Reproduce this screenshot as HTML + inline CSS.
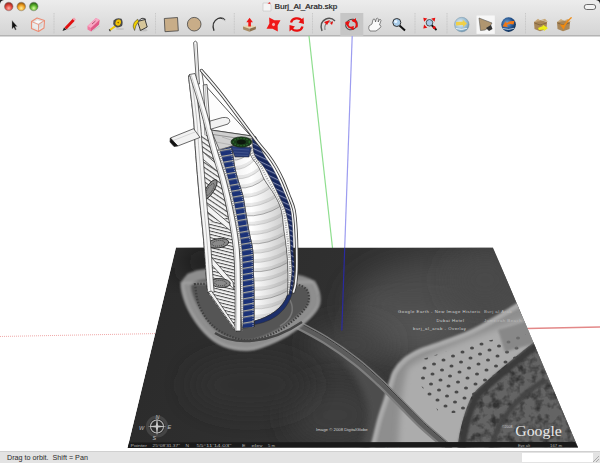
<!DOCTYPE html>
<html><head><meta charset="utf-8">
<style>
html,body{margin:0;padding:0;width:600px;height:463px;overflow:hidden;background:#fff;font-family:"Liberation Sans",sans-serif;}
#tb{position:absolute;left:0;top:0;width:600px;height:35px;background:linear-gradient(#ececec,#d5d5d5);border-bottom:1px solid #b4b4b4;box-shadow:0 1px 0 #d8d8d8;}
#title{position:absolute;left:274.5px;top:1.8px;font-size:8.1px;color:#333;text-shadow:0.35px 0 0 #555;}
#status{position:absolute;left:0;top:451px;width:600px;height:12px;background:#e3e3e3;border-top:1px solid #d0d0d0;}
#stxt{position:absolute;left:7px;top:453.4px;font-size:7.2px;color:#2a2a2a;}
#field{position:absolute;left:522px;top:453px;width:71px;height:9px;background:#fff;}
svg{position:absolute;left:0;top:0;}
</style></head><body>
<div id="tb"></div>
<div id="title">Burj_Al_Arab.skp</div>

<svg width="600" height="463" viewBox="0 0 600 463">
<defs>
<filter id="blur05" x="-20%" y="-20%" width="140%" height="140%"><feGaussianBlur stdDeviation="0.5"/></filter>
<filter id="blur1" x="-20%" y="-20%" width="140%" height="140%"><feGaussianBlur stdDeviation="1.2"/></filter>
<filter id="blur3" x="-30%" y="-30%" width="160%" height="160%"><feGaussianBlur stdDeviation="3"/></filter>
<filter id="blur6" x="-50%" y="-50%" width="200%" height="200%"><feGaussianBlur stdDeviation="6"/></filter>
<filter id="blur12" x="-60%" y="-60%" width="220%" height="220%"><feGaussianBlur stdDeviation="14"/></filter>
<filter id="noise" x="0" y="0" width="100%" height="100%"><feTurbulence type="fractalNoise" baseFrequency="0.35" numOctaves="2" seed="3"/><feColorMatrix type="matrix" values="0 0 0 0 0  0 0 0 0 0  0 0 0 0 0  0 0 0 1.8 -0.6"/><feComposite in2="SourceGraphic" operator="in"/></filter>
<filter id="noise2" x="0" y="0" width="100%" height="100%"><feTurbulence type="fractalNoise" baseFrequency="0.12" numOctaves="3" seed="7"/><feColorMatrix type="matrix" values="0 0 0 0 0  0 0 0 0 0  0 0 0 0 0  0 0 0 2.6 -1.1"/><feComposite in2="SourceGraphic" operator="in"/></filter>
<clipPath id="mapclip"><polygon points="176,247.5 493,247.5 578,447.5 127.5,448"/></clipPath>
<pattern id="slats2" width="3.2" height="3.2" patternUnits="userSpaceOnUse" patternTransform="rotate(14)">
 <rect width="3.2" height="3.2" fill="#f2f2f2"/><rect width="3.2" height="1" fill="#4a4a4a"/></pattern>
<pattern id="slats" width="4" height="4" patternUnits="userSpaceOnUse" patternTransform="rotate(34)">
 <rect width="4" height="4" fill="#f4f4f4"/><rect width="4" height="1.1" fill="#555"/></pattern>
<pattern id="bluestripe" width="10" height="6" patternUnits="userSpaceOnUse" patternTransform="rotate(-10)">
 <rect width="10" height="6" fill="#1b3278"/><rect width="10" height="1.3" fill="#aaa89c"/></pattern>
<pattern id="bluestripe2" width="8" height="4.5" patternUnits="userSpaceOnUse" patternTransform="rotate(25)">
 <rect width="8" height="4.5" fill="#17275e"/><rect width="8" height="1.1" fill="#7a84a8"/></pattern>
<linearGradient id="sailg" x1="0" y1="0" x2="1" y2="0">
 <stop offset="0" stop-color="#f0f0f0"/><stop offset="0.35" stop-color="#ffffff"/><stop offset="1" stop-color="#c6c6c6"/></linearGradient>
<pattern id="ribs" width="40" height="10.5" patternUnits="userSpaceOnUse" patternTransform="rotate(-12)">
 <rect width="40" height="10.5" fill="#ffffff" fill-opacity="0"/>
 <rect y="7.5" width="40" height="3" fill="#000" fill-opacity="0.10"/>
 <rect y="10" width="40" height="0.5" fill="#000" fill-opacity="0.35"/></pattern>
<linearGradient id="mapg" x1="0" y1="0" x2="1" y2="0.2">
 <stop offset="0" stop-color="#2a2a2a"/><stop offset="0.5" stop-color="#303030"/><stop offset="1" stop-color="#454545"/></linearGradient>
</defs>
<line x1="0" y1="336.5" x2="160" y2="333.5" stroke="#f0a8a8" stroke-width="1" stroke-dasharray="1,1"/>
<line x1="527" y1="328.5" x2="600" y2="327" stroke="#e38888" stroke-width="1.3"/>
<line x1="309" y1="36" x2="332.5" y2="248" stroke="#8ede8e" stroke-width="1.2"/>
<line x1="352.2" y1="36" x2="344.7" y2="248" stroke="#9c9cf0" stroke-width="1.2"/>
<g clip-path="url(#mapclip)">
<polygon points="176,247.5 493,247.5 578,447.5 127.5,448" fill="url(#mapg)"/>
<ellipse cx="450" cy="305" rx="100" ry="45" fill="#4c4c4c" filter="url(#blur12)"/>
<ellipse cx="410" cy="330" rx="55" ry="22" fill="#555" filter="url(#blur12)"/>
<ellipse cx="485" cy="280" rx="35" ry="28" fill="#4a4a4a" filter="url(#blur12)"/>
<ellipse cx="350" cy="345" rx="40" ry="18" fill="#444" filter="url(#blur12)"/>
<ellipse cx="215" cy="262" rx="40" ry="14" fill="#1e1e1e" filter="url(#blur12)"/>
<ellipse cx="335" cy="415" rx="45" ry="30" fill="#3c3c3c" filter="url(#blur12)"/>
<ellipse cx="250" cy="385" rx="60" ry="25" fill="#333" filter="url(#blur12)"/>
<path d="M330,345 C360,360 385,380 400,400 L430,450 L360,450 C370,420 380,400 330,345 Z" fill="#4e4e4e" filter="url(#blur3)"/>
<path d="M522.0,303.0 C516.7,306.2 498.8,317.0 490.0,322.0 C481.2,327.0 477.3,329.3 469.0,333.0 C460.7,336.7 448.2,341.0 440.0,344.0 C431.8,347.0 425.8,348.3 420.0,351.0 C414.2,353.7 409.2,356.5 405.0,360.0 C400.8,363.5 397.4,367.7 395.0,372.0 C392.6,376.3 391.9,380.8 390.4,385.6 C388.9,390.4 387.6,395.1 385.8,400.7 C384.0,406.2 381.8,411.8 379.8,418.9 C377.8,425.9 375.2,437.5 373.7,443.0 C372.2,448.5 371.4,450.5 371.0,452.0 L600,452 L600,290 Z" fill="#8e8e8e" filter="url(#blur1)"/>
<path d="M522.0,303.0 C516.7,306.2 498.8,317.0 490.0,322.0 C481.2,327.0 477.3,329.3 469.0,333.0 C460.7,336.7 448.2,341.0 440.0,344.0 C431.8,347.0 425.8,348.3 420.0,351.0 C414.2,353.7 409.2,356.5 405.0,360.0 C400.8,363.5 397.4,367.7 395.0,372.0 C392.6,376.3 391.9,380.8 390.4,385.6 C388.9,390.4 387.6,395.1 385.8,400.7 C384.0,406.2 381.8,411.8 379.8,418.9 C377.8,425.9 375.2,437.5 373.7,443.0 C372.2,448.5 371.4,450.5 371.0,452.0" stroke="#aaaaaa" stroke-width="5" fill="none" filter="url(#blur1)"/>
<path d="M408,368 C430,352 480,335 525,318 L545,350 C505,375 475,400 458,450 L398,450 C400,410 402,385 408,368 Z" fill="#acacac" filter="url(#blur3)"/>
<clipPath id="beachclip"><path d="M416,378 L423,359 C450,350 490,338 526,334 L520,357 C500,372 485,385 466,412 L440,414 Z"/></clipPath>
<g clip-path="url(#beachclip)" fill="#4a4a4a" filter="url(#blur05)"><ellipse cx="419.5" cy="342.0" rx="2" ry="1.6"/><ellipse cx="429.0" cy="338.0" rx="2" ry="1.6"/><ellipse cx="438.5" cy="334.0" rx="2" ry="1.6"/><ellipse cx="448.0" cy="330.0" rx="2" ry="1.6"/><ellipse cx="457.5" cy="326.0" rx="2" ry="1.6"/><ellipse cx="467.0" cy="322.0" rx="2" ry="1.6"/><ellipse cx="476.5" cy="318.0" rx="2" ry="1.6"/><ellipse cx="486.0" cy="314.0" rx="2" ry="1.6"/><ellipse cx="495.5" cy="310.0" rx="2" ry="1.6"/><ellipse cx="505.0" cy="306.0" rx="2" ry="1.6"/><ellipse cx="514.5" cy="302.0" rx="2" ry="1.6"/><ellipse cx="524.0" cy="298.0" rx="2" ry="1.6"/><ellipse cx="533.5" cy="294.0" rx="2" ry="1.6"/><ellipse cx="543.0" cy="290.0" rx="2" ry="1.6"/><ellipse cx="418.0" cy="352.0" rx="2" ry="1.6"/><ellipse cx="427.5" cy="348.0" rx="2" ry="1.6"/><ellipse cx="437.0" cy="344.0" rx="2" ry="1.6"/><ellipse cx="446.5" cy="340.0" rx="2" ry="1.6"/><ellipse cx="456.0" cy="336.0" rx="2" ry="1.6"/><ellipse cx="465.5" cy="332.0" rx="2" ry="1.6"/><ellipse cx="475.0" cy="328.0" rx="2" ry="1.6"/><ellipse cx="484.5" cy="324.0" rx="2" ry="1.6"/><ellipse cx="494.0" cy="320.0" rx="2" ry="1.6"/><ellipse cx="503.5" cy="316.0" rx="2" ry="1.6"/><ellipse cx="513.0" cy="312.0" rx="2" ry="1.6"/><ellipse cx="522.5" cy="308.0" rx="2" ry="1.6"/><ellipse cx="532.0" cy="304.0" rx="2" ry="1.6"/><ellipse cx="541.5" cy="300.0" rx="2" ry="1.6"/><ellipse cx="416.5" cy="362.0" rx="2" ry="1.6"/><ellipse cx="426.0" cy="358.0" rx="2" ry="1.6"/><ellipse cx="435.5" cy="354.0" rx="2" ry="1.6"/><ellipse cx="445.0" cy="350.0" rx="2" ry="1.6"/><ellipse cx="454.5" cy="346.0" rx="2" ry="1.6"/><ellipse cx="464.0" cy="342.0" rx="2" ry="1.6"/><ellipse cx="473.5" cy="338.0" rx="2" ry="1.6"/><ellipse cx="483.0" cy="334.0" rx="2" ry="1.6"/><ellipse cx="492.5" cy="330.0" rx="2" ry="1.6"/><ellipse cx="502.0" cy="326.0" rx="2" ry="1.6"/><ellipse cx="511.5" cy="322.0" rx="2" ry="1.6"/><ellipse cx="521.0" cy="318.0" rx="2" ry="1.6"/><ellipse cx="530.5" cy="314.0" rx="2" ry="1.6"/><ellipse cx="540.0" cy="310.0" rx="2" ry="1.6"/><ellipse cx="415.0" cy="372.0" rx="2" ry="1.6"/><ellipse cx="424.5" cy="368.0" rx="2" ry="1.6"/><ellipse cx="434.0" cy="364.0" rx="2" ry="1.6"/><ellipse cx="443.5" cy="360.0" rx="2" ry="1.6"/><ellipse cx="453.0" cy="356.0" rx="2" ry="1.6"/><ellipse cx="462.5" cy="352.0" rx="2" ry="1.6"/><ellipse cx="472.0" cy="348.0" rx="2" ry="1.6"/><ellipse cx="481.5" cy="344.0" rx="2" ry="1.6"/><ellipse cx="491.0" cy="340.0" rx="2" ry="1.6"/><ellipse cx="500.5" cy="336.0" rx="2" ry="1.6"/><ellipse cx="510.0" cy="332.0" rx="2" ry="1.6"/><ellipse cx="519.5" cy="328.0" rx="2" ry="1.6"/><ellipse cx="529.0" cy="324.0" rx="2" ry="1.6"/><ellipse cx="538.5" cy="320.0" rx="2" ry="1.6"/><ellipse cx="413.5" cy="382.0" rx="2" ry="1.6"/><ellipse cx="423.0" cy="378.0" rx="2" ry="1.6"/><ellipse cx="432.5" cy="374.0" rx="2" ry="1.6"/><ellipse cx="442.0" cy="370.0" rx="2" ry="1.6"/><ellipse cx="451.5" cy="366.0" rx="2" ry="1.6"/><ellipse cx="461.0" cy="362.0" rx="2" ry="1.6"/><ellipse cx="470.5" cy="358.0" rx="2" ry="1.6"/><ellipse cx="480.0" cy="354.0" rx="2" ry="1.6"/><ellipse cx="489.5" cy="350.0" rx="2" ry="1.6"/><ellipse cx="499.0" cy="346.0" rx="2" ry="1.6"/><ellipse cx="508.5" cy="342.0" rx="2" ry="1.6"/><ellipse cx="518.0" cy="338.0" rx="2" ry="1.6"/><ellipse cx="527.5" cy="334.0" rx="2" ry="1.6"/><ellipse cx="537.0" cy="330.0" rx="2" ry="1.6"/><ellipse cx="412.0" cy="392.0" rx="2" ry="1.6"/><ellipse cx="421.5" cy="388.0" rx="2" ry="1.6"/><ellipse cx="431.0" cy="384.0" rx="2" ry="1.6"/><ellipse cx="440.5" cy="380.0" rx="2" ry="1.6"/><ellipse cx="450.0" cy="376.0" rx="2" ry="1.6"/><ellipse cx="459.5" cy="372.0" rx="2" ry="1.6"/><ellipse cx="469.0" cy="368.0" rx="2" ry="1.6"/><ellipse cx="478.5" cy="364.0" rx="2" ry="1.6"/><ellipse cx="488.0" cy="360.0" rx="2" ry="1.6"/><ellipse cx="497.5" cy="356.0" rx="2" ry="1.6"/><ellipse cx="507.0" cy="352.0" rx="2" ry="1.6"/><ellipse cx="516.5" cy="348.0" rx="2" ry="1.6"/><ellipse cx="526.0" cy="344.0" rx="2" ry="1.6"/><ellipse cx="535.5" cy="340.0" rx="2" ry="1.6"/><ellipse cx="410.5" cy="402.0" rx="2" ry="1.6"/><ellipse cx="420.0" cy="398.0" rx="2" ry="1.6"/><ellipse cx="429.5" cy="394.0" rx="2" ry="1.6"/><ellipse cx="439.0" cy="390.0" rx="2" ry="1.6"/><ellipse cx="448.5" cy="386.0" rx="2" ry="1.6"/><ellipse cx="458.0" cy="382.0" rx="2" ry="1.6"/><ellipse cx="467.5" cy="378.0" rx="2" ry="1.6"/><ellipse cx="477.0" cy="374.0" rx="2" ry="1.6"/><ellipse cx="486.5" cy="370.0" rx="2" ry="1.6"/><ellipse cx="496.0" cy="366.0" rx="2" ry="1.6"/><ellipse cx="505.5" cy="362.0" rx="2" ry="1.6"/><ellipse cx="515.0" cy="358.0" rx="2" ry="1.6"/><ellipse cx="524.5" cy="354.0" rx="2" ry="1.6"/><ellipse cx="534.0" cy="350.0" rx="2" ry="1.6"/><ellipse cx="409.0" cy="412.0" rx="2" ry="1.6"/><ellipse cx="418.5" cy="408.0" rx="2" ry="1.6"/><ellipse cx="428.0" cy="404.0" rx="2" ry="1.6"/><ellipse cx="437.5" cy="400.0" rx="2" ry="1.6"/><ellipse cx="447.0" cy="396.0" rx="2" ry="1.6"/><ellipse cx="456.5" cy="392.0" rx="2" ry="1.6"/><ellipse cx="466.0" cy="388.0" rx="2" ry="1.6"/><ellipse cx="475.5" cy="384.0" rx="2" ry="1.6"/><ellipse cx="485.0" cy="380.0" rx="2" ry="1.6"/><ellipse cx="494.5" cy="376.0" rx="2" ry="1.6"/><ellipse cx="504.0" cy="372.0" rx="2" ry="1.6"/><ellipse cx="513.5" cy="368.0" rx="2" ry="1.6"/><ellipse cx="523.0" cy="364.0" rx="2" ry="1.6"/><ellipse cx="532.5" cy="360.0" rx="2" ry="1.6"/><ellipse cx="407.5" cy="422.0" rx="2" ry="1.6"/><ellipse cx="417.0" cy="418.0" rx="2" ry="1.6"/><ellipse cx="426.5" cy="414.0" rx="2" ry="1.6"/><ellipse cx="436.0" cy="410.0" rx="2" ry="1.6"/><ellipse cx="445.5" cy="406.0" rx="2" ry="1.6"/><ellipse cx="455.0" cy="402.0" rx="2" ry="1.6"/><ellipse cx="464.5" cy="398.0" rx="2" ry="1.6"/><ellipse cx="474.0" cy="394.0" rx="2" ry="1.6"/><ellipse cx="483.5" cy="390.0" rx="2" ry="1.6"/><ellipse cx="493.0" cy="386.0" rx="2" ry="1.6"/><ellipse cx="502.5" cy="382.0" rx="2" ry="1.6"/><ellipse cx="512.0" cy="378.0" rx="2" ry="1.6"/><ellipse cx="521.5" cy="374.0" rx="2" ry="1.6"/><ellipse cx="531.0" cy="370.0" rx="2" ry="1.6"/><ellipse cx="406.0" cy="432.0" rx="2" ry="1.6"/><ellipse cx="415.5" cy="428.0" rx="2" ry="1.6"/><ellipse cx="425.0" cy="424.0" rx="2" ry="1.6"/><ellipse cx="434.5" cy="420.0" rx="2" ry="1.6"/><ellipse cx="444.0" cy="416.0" rx="2" ry="1.6"/><ellipse cx="453.5" cy="412.0" rx="2" ry="1.6"/><ellipse cx="463.0" cy="408.0" rx="2" ry="1.6"/><ellipse cx="472.5" cy="404.0" rx="2" ry="1.6"/><ellipse cx="482.0" cy="400.0" rx="2" ry="1.6"/><ellipse cx="491.5" cy="396.0" rx="2" ry="1.6"/><ellipse cx="501.0" cy="392.0" rx="2" ry="1.6"/><ellipse cx="510.5" cy="388.0" rx="2" ry="1.6"/><ellipse cx="520.0" cy="384.0" rx="2" ry="1.6"/><ellipse cx="529.5" cy="380.0" rx="2" ry="1.6"/><ellipse cx="404.5" cy="442.0" rx="2" ry="1.6"/><ellipse cx="414.0" cy="438.0" rx="2" ry="1.6"/><ellipse cx="423.5" cy="434.0" rx="2" ry="1.6"/><ellipse cx="433.0" cy="430.0" rx="2" ry="1.6"/><ellipse cx="442.5" cy="426.0" rx="2" ry="1.6"/><ellipse cx="452.0" cy="422.0" rx="2" ry="1.6"/><ellipse cx="461.5" cy="418.0" rx="2" ry="1.6"/><ellipse cx="471.0" cy="414.0" rx="2" ry="1.6"/><ellipse cx="480.5" cy="410.0" rx="2" ry="1.6"/><ellipse cx="490.0" cy="406.0" rx="2" ry="1.6"/><ellipse cx="499.5" cy="402.0" rx="2" ry="1.6"/><ellipse cx="509.0" cy="398.0" rx="2" ry="1.6"/><ellipse cx="518.5" cy="394.0" rx="2" ry="1.6"/><ellipse cx="528.0" cy="390.0" rx="2" ry="1.6"/><ellipse cx="403.0" cy="452.0" rx="2" ry="1.6"/><ellipse cx="412.5" cy="448.0" rx="2" ry="1.6"/><ellipse cx="422.0" cy="444.0" rx="2" ry="1.6"/><ellipse cx="431.5" cy="440.0" rx="2" ry="1.6"/><ellipse cx="441.0" cy="436.0" rx="2" ry="1.6"/><ellipse cx="450.5" cy="432.0" rx="2" ry="1.6"/><ellipse cx="460.0" cy="428.0" rx="2" ry="1.6"/><ellipse cx="469.5" cy="424.0" rx="2" ry="1.6"/><ellipse cx="479.0" cy="420.0" rx="2" ry="1.6"/><ellipse cx="488.5" cy="416.0" rx="2" ry="1.6"/><ellipse cx="498.0" cy="412.0" rx="2" ry="1.6"/><ellipse cx="507.5" cy="408.0" rx="2" ry="1.6"/><ellipse cx="517.0" cy="404.0" rx="2" ry="1.6"/><ellipse cx="526.5" cy="400.0" rx="2" ry="1.6"/><ellipse cx="401.5" cy="462.0" rx="2" ry="1.6"/><ellipse cx="411.0" cy="458.0" rx="2" ry="1.6"/><ellipse cx="420.5" cy="454.0" rx="2" ry="1.6"/><ellipse cx="430.0" cy="450.0" rx="2" ry="1.6"/><ellipse cx="439.5" cy="446.0" rx="2" ry="1.6"/><ellipse cx="449.0" cy="442.0" rx="2" ry="1.6"/><ellipse cx="458.5" cy="438.0" rx="2" ry="1.6"/><ellipse cx="468.0" cy="434.0" rx="2" ry="1.6"/><ellipse cx="477.5" cy="430.0" rx="2" ry="1.6"/><ellipse cx="487.0" cy="426.0" rx="2" ry="1.6"/><ellipse cx="496.5" cy="422.0" rx="2" ry="1.6"/><ellipse cx="506.0" cy="418.0" rx="2" ry="1.6"/><ellipse cx="515.5" cy="414.0" rx="2" ry="1.6"/><ellipse cx="525.0" cy="410.0" rx="2" ry="1.6"/></g>
<path d="M534.0,342.0 C531.3,344.2 523.3,350.7 518.0,355.0 C512.7,359.3 507.0,363.8 502.0,368.0 C497.0,372.2 492.7,375.8 488.0,380.0 C483.3,384.2 477.7,388.0 474.0,393.0 C470.3,398.0 468.3,403.5 466.0,410.0 C463.7,416.5 461.5,425.0 460.0,432.0 C458.5,439.0 457.5,448.7 457.0,452.0 L600,452 L600,330 Z" fill="#646464"/>
<path d="M534.0,342.0 C531.3,344.2 523.3,350.7 518.0,355.0 C512.7,359.3 507.0,363.8 502.0,368.0 C497.0,372.2 492.7,375.8 488.0,380.0 C483.3,384.2 477.7,388.0 474.0,393.0 C470.3,398.0 468.3,403.5 466.0,410.0 C463.7,416.5 461.5,425.0 460.0,432.0 C458.5,439.0 457.5,448.7 457.0,452.0 L600,452 L600,330 Z" fill="#000" opacity="0.5" filter="url(#noise2)"/>
<path d="M538.0,344.0 C535.3,346.2 527.3,352.7 522.0,357.0 C516.7,361.3 511.0,365.8 506.0,370.0 C501.0,374.2 496.7,377.8 492.0,382.0 C487.3,386.2 481.7,390.0 478.0,395.0 C474.3,400.0 472.3,405.5 470.0,412.0 C467.7,418.5 465.5,427.0 464.0,434.0 C462.5,441.0 461.5,450.7 461.0,454.0" stroke="#3a3a3a" stroke-width="7" fill="none" filter="url(#blur1)"/>
<path d="M545,380 C520,395 500,415 490,450" stroke="#444" stroke-width="5" fill="none" filter="url(#blur1)"/>
<path d="M498,330 L530,320 L536,343 L505,352 Z" fill="#7a7a7a" filter="url(#blur1)" opacity="0.7"/>
<path d="M290.0,322.0 C290.9,322.3 289.2,320.6 295.1,323.6 C301.0,326.6 315.3,333.9 325.4,340.2 C335.5,346.5 346.5,354.3 355.6,361.4 C364.7,368.5 372.2,375.6 379.8,382.6 C387.4,389.7 393.9,396.6 401.0,403.7 C408.1,410.8 414.8,418.1 422.1,424.9 C429.4,431.7 440.2,440.4 444.8,444.6 C449.4,448.8 449.1,449.1 450.0,450.0" stroke="#7e7e7e" stroke-width="8.5" fill="none" filter="url(#blur05)"/>
<path d="M290.0,322.0 C290.9,322.3 289.2,320.6 295.1,323.6 C301.0,326.6 315.3,333.9 325.4,340.2 C335.5,346.5 346.5,354.3 355.6,361.4 C364.7,368.5 372.2,375.6 379.8,382.6 C387.4,389.7 393.9,396.6 401.0,403.7 C408.1,410.8 414.8,418.1 422.1,424.9 C429.4,431.7 440.2,440.4 444.8,444.6 C449.4,448.8 449.1,449.1 450.0,450.0" stroke="#5c5c5c" stroke-width="4" fill="none"/>
<path d="M290.0,322.0 C290.9,322.3 289.2,320.6 295.1,323.6 C301.0,326.6 315.3,333.9 325.4,340.2 C335.5,346.5 346.5,354.3 355.6,361.4 C364.7,368.5 372.2,375.6 379.8,382.6 C387.4,389.7 393.9,396.6 401.0,403.7 C408.1,410.8 414.8,418.1 422.1,424.9 C429.4,431.7 440.2,440.4 444.8,444.6 C449.4,448.8 449.1,449.1 450.0,450.0" stroke="#3a3a3a" stroke-width="1" fill="none" transform="translate(1.5,-2)"/>
<path d="M190.5,278.1 C189.7,279.6 185.4,282.1 185.8,287.1 C186.2,292.1 189.3,301.0 193.0,308.1 C196.7,315.2 202.5,324.1 207.9,329.7 C213.2,335.3 218.1,339.1 225.2,341.7 C232.2,344.3 241.7,346.1 250.0,345.3 C258.3,344.5 267.4,340.3 274.8,336.9 C282.3,333.5 288.4,329.7 294.6,324.9 C300.8,320.1 308.7,312.9 312.0,308.1 C315.3,303.3 314.9,300.1 314.4,296.1 C314.0,292.1 312.8,286.9 309.5,284.1 C306.2,281.3 301.5,280.7 294.6,279.3 C287.8,277.8 279.1,276.3 268.6,275.4 C258.1,274.5 242.4,273.8 231.4,273.6 C220.4,273.5 209.4,273.8 202.6,274.5 C195.8,275.2 192.5,277.5 190.5,278.1 Z" fill="#545454" stroke="#8e8e8e" stroke-width="10" filter="url(#blur1)"/>
<path d="M182.0,283.0 C183.2,287.2 185.2,300.0 189.0,308.0 C192.8,316.0 199.2,324.8 205.0,331.0 C210.8,337.2 216.5,342.0 224.0,345.0 C231.5,348.0 241.2,349.8 250.0,349.0 C258.8,348.2 269.0,343.7 277.0,340.0 C285.0,336.3 291.3,332.3 298.0,327.0 C304.7,321.7 313.5,313.3 317.0,308.0 C320.5,302.7 319.5,299.3 319.0,295.0 C318.5,290.7 314.8,284.2 314.0,282.0 Z" fill="none" stroke="#a8a8a8" stroke-width="3" opacity="0.6" filter="url(#blur1)"/>
<path d="M195.0,284.0 C195.7,287.5 196.2,298.2 199.0,305.0 C201.8,311.8 206.5,319.7 212.0,325.0 C217.5,330.3 225.3,334.5 232.0,337.0 C238.7,339.5 244.7,340.8 252.0,340.0 C259.3,339.2 268.7,335.7 276.0,332.0 C283.3,328.3 290.7,322.8 296.0,318.0 C301.3,313.2 306.3,307.8 308.0,303.0 C309.7,298.2 309.0,292.5 306.0,289.0 C303.0,285.5 292.7,283.2 290.0,282.0 Z" fill="none" stroke="#404040" stroke-width="2.2" stroke-dasharray="1.5,1.5" filter="url(#blur05)"/>
<path d="M215,333 C235,346 270,344 302,322" fill="none" stroke="#444" stroke-width="2.5" filter="url(#blur05)"/>
<path d="M290,300 C296,312 290,320 280,326" fill="none" stroke="#777" stroke-width="1.5"/>
<g font-family="Liberation Sans" font-size="4.3" fill="#d4d4d4">
<text x="398" y="313" letter-spacing="0.5">Google Earth - New Image Historic</text>
<text x="484" y="313" letter-spacing="0.5" fill="#bbb">Burj al Arab</text>
<text x="436.5" y="321.5" letter-spacing="0.5">Dubai Hotel</text>
<text x="484" y="321.5" letter-spacing="0.5" fill="#bbb">Jumeirah Beach</text>
<text x="413" y="330" letter-spacing="0.5">burj_al_arab - Overlay</text>
<text x="316" y="431">Image &#169; 2008 DigitalGlobe</text>
<text x="367.5" y="446.5">Streaming |||||||||| 100%</text>
</g>
<text x="515.3" y="435.5" font-family="Liberation Serif" font-size="15" fill="#e8e8e8" textLength="46.5" lengthAdjust="spacingAndGlyphs">Google</text>
<text x="502" y="428" font-family="Liberation Sans" font-size="3.5" fill="#ccc">&#169;2008</text>
<g transform="translate(157,426.5)" fill="none">
<circle r="9.5" stroke="#4a4a4a" stroke-width="3.2" opacity="0.8"/>
<circle r="6.5" stroke="#b4b4b4" stroke-width="1.1"/>
<path d="M0,-9.5 L1.1,-1.1 L9.5,0 L1.1,1.1 L0,9.5 L-1.1,1.1 L-9.5,0 L-1.1,-1.1 Z" fill="#c8c8c8" stroke="none"/>
</g>
<g font-family="Liberation Sans" font-size="5.5" fill="#bcbcbc" font-style="italic"><text x="155.5" y="418.5">N</text><text x="152.5" y="439.5">S</text><text x="139" y="429.5">W</text><text x="167.5" y="428.5">E</text></g>
<polygon points="129,442.5 575,442 578,447.5 127.5,448" fill="#1a1a1a"/>
<g font-family="Liberation Sans" font-size="4.3" fill="#b0b0b0">
<text x="130.5" y="447.3" textLength="16.5" lengthAdjust="spacingAndGlyphs">Pointer</text>
<text x="152.5" y="447.3" textLength="27.5" lengthAdjust="spacingAndGlyphs">25&#176;08'31.37&quot;</text>
<text x="185.5" y="447.3" textLength="3.5" lengthAdjust="spacingAndGlyphs">N</text>
<text x="196.5" y="447.3" textLength="35" lengthAdjust="spacingAndGlyphs">55&#176;11'14.03&quot;</text>
<text x="242" y="447.3" textLength="3.5" lengthAdjust="spacingAndGlyphs">E</text>
<text x="251.5" y="447.3" textLength="11" lengthAdjust="spacingAndGlyphs">elev</text>
<text x="268" y="447.3" textLength="7" lengthAdjust="spacingAndGlyphs">5 m</text>
<text x="518" y="447.3" textLength="12" lengthAdjust="spacingAndGlyphs">Eye alt</text>
<text x="550" y="447.3" textLength="12" lengthAdjust="spacingAndGlyphs">167 m</text>
</g>
</g>
<line x1="344.7" y1="248" x2="341.8" y2="330.5" stroke="#2a2aa0" stroke-width="1.2"/>
<g stroke="#2a2a2a" stroke-width="0.7" stroke-linejoin="round">
<path d="M193.6,42.5 Q195.3,39.8 197,42.3 L199.4,84 L196.6,84 Z" fill="#fafafa"/>
<path d="M195.2,44 L197.9,84" stroke="#aaa" stroke-width="0.4" fill="none"/>
<path d="M201.5,70.5 C204.9,74.6 213.1,83.6 222.0,95.0 C230.9,106.4 247.3,129.0 255.0,139.0 C262.7,149.0 265.8,152.3 268.0,155.0 L250.5,135.8 L211.0,130.0 Z" fill="#fdfdfd"/>
<path d="M205.8,86 L250.5,135.8" fill="none" stroke-width="0.8"/>
<path d="M203.2,85 L207,84.5 L210.5,133 L206.5,133 Z" fill="#f6f6f6"/>
<path d="M205.1,85 L208.5,133" stroke="#777" stroke-width="0.4" fill="none"/>
<clipPath id="facclip"><path d="M188.5,76.0 C189.3,83.3 192.4,107.7 193.6,120.0 C194.8,132.3 194.4,136.7 195.4,150.0 C196.4,163.3 198.2,185.0 199.6,200.0 C201.0,215.0 202.4,225.8 203.6,240.0 C204.8,254.2 206.1,276.2 206.9,285.0 C207.7,293.8 208.1,291.7 208.3,293.0 L236.0,332.0 C235.0,324.2 235.2,303.5 235.0,290.0 C234.8,276.5 234.7,262.5 233.5,250.0 C232.3,237.5 230.2,226.7 228.0,215.0 C225.8,203.3 222.8,190.8 220.0,180.0 C217.2,169.2 214.2,161.3 211.0,150.0 C207.8,138.7 204.6,124.6 201.0,112.0 C197.4,99.4 191.4,80.8 189.5,74.5 Z"/></clipPath>
<path d="M188.5,76.0 C189.3,83.3 192.4,107.7 193.6,120.0 C194.8,132.3 194.4,136.7 195.4,150.0 C196.4,163.3 198.2,185.0 199.6,200.0 C201.0,215.0 202.4,225.8 203.6,240.0 C204.8,254.2 206.1,276.2 206.9,285.0 C207.7,293.8 208.1,291.7 208.3,293.0 L236.0,332.0 C235.0,324.2 235.2,303.5 235.0,290.0 C234.8,276.5 234.7,262.5 233.5,250.0 C232.3,237.5 230.2,226.7 228.0,215.0 C225.8,203.3 222.8,190.8 220.0,180.0 C217.2,169.2 214.2,161.3 211.0,150.0 C207.8,138.7 204.6,124.6 201.0,112.0 C197.4,99.4 191.4,80.8 189.5,74.5 Z" fill="url(#slats)"/>
<g clip-path="url(#facclip)"><path d="M180,230 L250,212 L250,340 L180,340 Z" fill="url(#slats2)" stroke="none"/></g>
<g clip-path="url(#facclip)" stroke="none"><path d="M180,70 L240,70 L240,128 L180,140 Z" fill="#f8f8f8"/>
<path d="M197,80 L200,135 M201,82 L205,135" stroke="#444" stroke-width="0.6" fill="none"/></g>
<path d="M197.5,147 L222,169 L223.5,176.5 L198,155 Z" fill="#f4f4f4"/>
<path d="M201,199.5 L230,224 L231.5,231.5 L201.5,207 Z" fill="#f4f4f4"/>
<path d="M205,250 L233,282 L234,289.5 L205.5,258 Z" fill="#f4f4f4"/>
<ellipse cx="210" cy="189.5" rx="4" ry="11.5" transform="rotate(33 210 189.5)" fill="#8a8a8a" stroke="#2a2a2a" stroke-width="0.9"/>
<ellipse cx="210" cy="189.5" rx="2.4" ry="6.8999999999999995" transform="rotate(33 210 189.5)" fill="none" stroke="#222" stroke-width="0.7" stroke-dasharray="1,1"/>
<ellipse cx="218.3" cy="243.3" rx="10.5" ry="4.6" transform="rotate(-8 218.3 243.3)" fill="#8a8a8a" stroke="#2a2a2a" stroke-width="0.9"/>
<ellipse cx="218.3" cy="243.3" rx="6.3" ry="2.76" transform="rotate(-8 218.3 243.3)" fill="none" stroke="#222" stroke-width="0.7" stroke-dasharray="1,1"/>
<ellipse cx="220.5" cy="283" rx="9.8" ry="4.4" transform="rotate(4 220.5 283)" fill="#8a8a8a" stroke="#2a2a2a" stroke-width="0.9"/>
<ellipse cx="220.5" cy="283" rx="5.88" ry="2.64" transform="rotate(4 220.5 283)" fill="none" stroke="#222" stroke-width="0.7" stroke-dasharray="1,1"/>
<path d="M188.5,76.0 C189.3,83.3 192.4,107.7 193.6,120.0 C194.8,132.3 194.4,136.7 195.4,150.0 C196.4,163.3 198.2,185.0 199.6,200.0 C201.0,215.0 202.4,225.8 203.6,240.0 C204.8,254.2 206.1,276.2 206.9,285.0 C207.7,293.8 208.1,291.7 208.3,293.0 L214.5,292.0 C214.3,290.8 214.2,293.7 213.5,285.0 C212.8,276.3 211.5,254.2 210.3,240.0 C209.1,225.8 207.8,215.0 206.5,200.0 C205.2,185.0 203.6,163.3 202.5,150.0 C201.4,136.7 201.4,132.4 200.0,120.0 C198.6,107.6 195.0,82.9 194.0,75.5 Z" fill="#f6f6f6"/>
<path d="M191.2,75.8 C192.2,83.1 195.5,107.6 196.8,120.0 C198.1,132.4 197.9,136.7 198.9,150.0 C200.0,163.3 201.7,185.0 203.1,200.0 C204.4,215.0 205.8,225.8 206.9,240.0 C208.1,254.2 209.5,276.2 210.2,285.0 C210.9,293.8 211.2,291.2 211.4,292.5" fill="none" stroke="#777" stroke-width="0.4"/>
<path d="M208.3,292 L236,331 L236,327 L211.5,291 Z" fill="#f0f0f0"/>
<path d="M211,130 L250.5,135.8 L256,137 L231.6,146.4 L219.5,150.2 Z" fill="#d0d0d0"/>
<path d="M213,134.5 L250,140" stroke="#555" stroke-width="0.5" fill="none"/>
<path d="M216,142 L232,145 M222,137 L240,143" stroke="#888" stroke-width="0.4" fill="none"/>
<clipPath id="sailclip"><path d="M231.6,146.4 L249.0,139.0 C249.3,141.7 249.1,150.3 250.7,155.0 C252.3,159.7 256.4,162.8 258.7,167.0 C261.0,171.2 262.0,175.3 264.7,180.0 C267.4,184.7 271.9,190.0 274.7,195.0 C277.5,200.0 279.8,204.2 281.3,210.0 C282.9,215.8 283.1,223.3 284.0,230.0 C284.9,236.7 286.0,243.3 286.7,250.0 C287.4,256.7 287.8,264.2 288.0,270.0 C288.2,275.8 288.1,280.8 288.0,285.0 C287.9,289.2 287.6,293.3 287.5,295.0 C283,308 270,317 254.6,321 L254.0,327.0 C254.0,320.8 254.1,299.5 254.0,290.0 C253.9,280.5 253.5,276.7 253.3,270.0 C253.1,263.3 253.5,256.7 252.7,250.0 C251.9,243.3 249.9,236.7 248.7,230.0 C247.5,223.3 246.3,215.8 245.3,210.0 C244.3,204.2 243.9,200.0 242.7,195.0 C241.5,190.0 239.3,184.7 238.0,180.0 C236.7,175.3 235.8,172.6 234.7,167.0 C233.6,161.4 232.1,149.8 231.6,146.4 Z"/></clipPath>
<path d="M231.6,146.4 L249.0,139.0 C249.3,141.7 249.1,150.3 250.7,155.0 C252.3,159.7 256.4,162.8 258.7,167.0 C261.0,171.2 262.0,175.3 264.7,180.0 C267.4,184.7 271.9,190.0 274.7,195.0 C277.5,200.0 279.8,204.2 281.3,210.0 C282.9,215.8 283.1,223.3 284.0,230.0 C284.9,236.7 286.0,243.3 286.7,250.0 C287.4,256.7 287.8,264.2 288.0,270.0 C288.2,275.8 288.1,280.8 288.0,285.0 C287.9,289.2 287.6,293.3 287.5,295.0 C283,308 270,317 254.6,321 L254.0,327.0 C254.0,320.8 254.1,299.5 254.0,290.0 C253.9,280.5 253.5,276.7 253.3,270.0 C253.1,263.3 253.5,256.7 252.7,250.0 C251.9,243.3 249.9,236.7 248.7,230.0 C247.5,223.3 246.3,215.8 245.3,210.0 C244.3,204.2 243.9,200.0 242.7,195.0 C241.5,190.0 239.3,184.7 238.0,180.0 C236.7,175.3 235.8,172.6 234.7,167.0 C233.6,161.4 232.1,149.8 231.6,146.4 Z" fill="url(#sailg)"/>
<g clip-path="url(#sailclip)" fill="none" stroke="none">
<path d="M231.6,156.5 Q241.9,158.0 252.2,146.5 L252.2,150.0 Q241.9,161.5 231.6,160.0 Z" fill="#000" opacity="0.08" filter="url(#blur05)"/>
<path d="M231.6,160.0 Q241.9,161.5 252.2,150.0" stroke="#666" stroke-width="0.5"/>
<path d="M233.3,165.8 Q244.4,167.3 255.6,155.8 L255.6,159.3 Q244.4,170.8 233.3,169.3 Z" fill="#000" opacity="0.08" filter="url(#blur05)"/>
<path d="M233.3,169.3 Q244.4,170.8 255.6,159.3" stroke="#aaa" stroke-width="0.5"/>
<path d="M235.6,175.1 Q248.5,176.6 261.4,165.1 L261.4,168.6 Q248.5,180.1 235.6,178.6 Z" fill="#000" opacity="0.08" filter="url(#blur05)"/>
<path d="M235.6,178.6 Q248.5,180.1 261.4,168.6" stroke="#aaa" stroke-width="0.5"/>
<path d="M238.5,184.4 Q252.1,185.9 265.7,174.4 L265.7,177.9 Q252.1,189.4 238.5,187.9 Z" fill="#000" opacity="0.08" filter="url(#blur05)"/>
<path d="M238.5,187.9 Q252.1,189.4 265.7,177.9" stroke="#666" stroke-width="0.5"/>
<path d="M241.1,193.7 Q256.3,195.2 271.5,183.7 L271.5,187.2 Q256.3,198.7 241.1,197.2 Z" fill="#000" opacity="0.08" filter="url(#blur05)"/>
<path d="M241.1,197.2 Q256.3,198.7 271.5,187.2" stroke="#aaa" stroke-width="0.5"/>
<path d="M242.7,203.0 Q260.0,204.5 277.4,193.0 L277.4,196.5 Q260.0,208.0 242.7,206.5 Z" fill="#000" opacity="0.08" filter="url(#blur05)"/>
<path d="M242.7,206.5 Q260.0,208.0 277.4,196.5" stroke="#aaa" stroke-width="0.5"/>
<path d="M244.3,212.3 Q262.9,213.8 281.5,202.3 L281.5,205.8 Q262.9,217.3 244.3,215.8 Z" fill="#000" opacity="0.08" filter="url(#blur05)"/>
<path d="M244.3,215.8 Q262.9,217.3 281.5,205.8" stroke="#666" stroke-width="0.5"/>
<path d="M245.9,221.6 Q264.9,223.1 284.0,211.6 L284.0,215.1 Q264.9,226.6 245.9,225.1 Z" fill="#000" opacity="0.08" filter="url(#blur05)"/>
<path d="M245.9,225.1 Q264.9,226.6 284.0,215.1" stroke="#aaa" stroke-width="0.5"/>
<path d="M247.6,230.9 Q266.4,232.4 285.2,220.9 L285.2,224.4 Q266.4,235.9 247.6,234.4 Z" fill="#000" opacity="0.08" filter="url(#blur05)"/>
<path d="M247.6,234.4 Q266.4,235.9 285.2,224.4" stroke="#aaa" stroke-width="0.5"/>
<path d="M249.4,240.2 Q268.0,241.7 286.5,230.2 L286.5,233.7 Q268.0,245.2 249.4,243.7 Z" fill="#000" opacity="0.08" filter="url(#blur05)"/>
<path d="M249.4,243.7 Q268.0,245.2 286.5,233.7" stroke="#666" stroke-width="0.5"/>
<path d="M250.8,249.5 Q269.3,251.0 287.8,239.5 L287.8,243.0 Q269.3,254.5 250.8,253.0 Z" fill="#000" opacity="0.08" filter="url(#blur05)"/>
<path d="M250.8,253.0 Q269.3,254.5 287.8,243.0" stroke="#aaa" stroke-width="0.5"/>
<path d="M251.1,258.8 Q270.0,260.3 288.8,248.8 L288.8,252.3 Q270.0,263.8 251.1,262.3 Z" fill="#000" opacity="0.08" filter="url(#blur05)"/>
<path d="M251.1,262.3 Q270.0,263.8 288.8,252.3" stroke="#aaa" stroke-width="0.5"/>
<path d="M251.4,268.1 Q270.4,269.6 289.5,258.1 L289.5,261.6 Q270.4,273.1 251.4,271.6 Z" fill="#000" opacity="0.08" filter="url(#blur05)"/>
<path d="M251.4,271.6 Q270.4,273.1 289.5,261.6" stroke="#666" stroke-width="0.5"/>
<path d="M251.7,277.4 Q270.8,278.9 290.0,267.4 L290.0,270.9 Q270.8,282.4 251.7,280.9 Z" fill="#000" opacity="0.08" filter="url(#blur05)"/>
<path d="M251.7,280.9 Q270.8,282.4 290.0,270.9" stroke="#aaa" stroke-width="0.5"/>
<path d="M252.0,286.7 Q271.0,288.2 290.0,276.7 L290.0,280.2 Q271.0,291.7 252.0,290.2 Z" fill="#000" opacity="0.08" filter="url(#blur05)"/>
<path d="M252.0,290.2 Q271.0,291.7 290.0,280.2" stroke="#aaa" stroke-width="0.5"/>
<path d="M252.0,296.0 Q270.9,297.5 289.8,286.0 L289.8,289.5 Q270.9,301.0 252.0,299.5 Z" fill="#000" opacity="0.08" filter="url(#blur05)"/>
<path d="M252.0,299.5 Q270.9,301.0 289.8,289.5" stroke="#666" stroke-width="0.5"/>
<path d="M252.0,305.3 Q270.8,306.8 289.5,295.3 L289.5,298.8 Q270.8,310.3 252.0,308.8 Z" fill="#000" opacity="0.08" filter="url(#blur05)"/>
<path d="M252.0,308.8 Q270.8,310.3 289.5,298.8" stroke="#aaa" stroke-width="0.5"/>
<path d="M252.0,314.6 Q270.8,316.1 289.5,304.6 L289.5,308.1 Q270.8,319.6 252.0,318.1 Z" fill="#000" opacity="0.08" filter="url(#blur05)"/>
<path d="M252.0,318.1 Q270.8,319.6 289.5,308.1" stroke="#aaa" stroke-width="0.5"/>
<path d="M252.0,323.9 Q270.8,325.4 289.5,313.9 L289.5,317.4 Q270.8,328.9 252.0,327.4 Z" fill="#000" opacity="0.08" filter="url(#blur05)"/>
<path d="M252.0,327.4 Q270.8,328.9 289.5,317.4" stroke="#666" stroke-width="0.5"/>
<path d="M252.0,333.2 Q270.8,334.7 289.5,323.2 L289.5,326.7 Q270.8,338.2 252.0,336.7 Z" fill="#000" opacity="0.08" filter="url(#blur05)"/>
<path d="M252.0,336.7 Q270.8,338.2 289.5,326.7" stroke="#aaa" stroke-width="0.5"/>
</g>
<path d="M249.0,139.0 C249.3,141.7 249.1,150.3 250.7,155.0 C252.3,159.7 256.4,162.8 258.7,167.0 C261.0,171.2 262.0,175.3 264.7,180.0 C267.4,184.7 271.9,190.0 274.7,195.0 C277.5,200.0 279.8,204.2 281.3,210.0 C282.9,215.8 283.1,223.3 284.0,230.0 C284.9,236.7 286.0,243.3 286.7,250.0 C287.4,256.7 287.8,264.2 288.0,270.0 C288.2,275.8 288.1,280.8 288.0,285.0 C287.9,289.2 287.6,293.3 287.5,295.0 L289.0,296.0 C289.2,294.2 290.0,289.3 290.5,285.0 C291.0,280.7 292.0,275.8 292.0,270.0 C292.0,264.2 291.1,256.7 290.7,250.0 C290.2,243.3 290.2,236.7 289.3,230.0 C288.4,223.3 287.1,215.8 285.3,210.0 C283.5,204.2 281.0,200.0 278.7,195.0 C276.4,190.0 273.8,184.7 271.3,180.0 C268.9,175.3 266.8,171.2 264.0,167.0 C261.2,162.8 256.7,159.8 254.7,155.0 C252.7,150.2 252.4,140.8 252.0,138.0 Z" fill="#f6f6f6" stroke-width="0.4"/>
<path d="M250.5,139.0 C250.9,141.7 250.9,150.3 252.7,155.0 C254.5,159.7 258.8,162.8 261.4,167.0 C263.9,171.2 265.4,175.3 268.0,180.0 C270.6,184.7 274.1,190.0 276.7,195.0 C279.2,200.0 281.6,204.2 283.3,210.0 C285.0,215.8 285.8,223.3 286.6,230.0 C287.5,236.7 288.1,243.3 288.7,250.0 C289.3,256.7 289.9,264.2 290.0,270.0 C290.1,275.8 289.5,280.8 289.2,285.0 C289.0,289.2 288.4,293.3 288.2,295.0" fill="none" stroke="#555" stroke-width="1.6" stroke-dasharray="1,1.3"/>
<path d="M250.5,139.0 C250.9,141.7 250.9,150.3 252.7,155.0 C254.5,159.7 258.8,162.8 261.4,167.0 C263.9,171.2 265.4,175.3 268.0,180.0 C270.6,184.7 274.1,190.0 276.7,195.0 C279.2,200.0 281.6,204.2 283.3,210.0 C285.0,215.8 285.8,223.3 286.6,230.0 C287.5,236.7 288.1,243.3 288.7,250.0 C289.3,256.7 289.9,264.2 290.0,270.0 C290.1,275.8 289.5,280.8 289.2,285.0 C289.0,289.2 288.4,293.3 288.2,295.0" fill="none" stroke="#fff" stroke-width="0.8" stroke-dasharray="1,1.3"/>
<path d="M252.0,138.0 C252.4,140.8 252.7,150.2 254.7,155.0 C256.7,159.8 261.2,162.8 264.0,167.0 C266.8,171.2 268.9,175.3 271.3,180.0 C273.8,184.7 276.4,190.0 278.7,195.0 C281.0,200.0 283.5,204.2 285.3,210.0 C287.1,215.8 288.4,223.3 289.3,230.0 C290.2,236.7 290.2,243.3 290.7,250.0 C291.1,256.7 292.0,264.2 292.0,270.0 C292.0,275.8 291.0,280.7 290.5,285.0 C290.0,289.3 289.2,294.2 289.0,296.0 L292.0,294.0 C292.2,292.5 292.6,289.0 293.0,285.0 C293.4,281.0 294.4,275.8 294.5,270.0 C294.6,264.2 293.6,256.7 293.3,250.0 C293.0,243.3 293.1,236.7 292.7,230.0 C292.3,223.3 291.9,215.8 290.7,210.0 C289.5,204.2 287.3,200.0 285.3,195.0 C283.3,190.0 280.9,184.7 278.7,180.0 C276.5,175.3 274.4,171.2 272.0,167.0 C269.6,162.8 266.7,160.0 264.0,155.0 C261.3,150.0 257.3,140.0 256.0,137.0 Z" fill="url(#bluestripe2)" stroke-width="0.4"/>
<path d="M287.5,295 C283,308 270,317 254.6,321 L254.6,324.5 C271,322 286,313 292,294 Z" fill="#1d2f6a" stroke-width="0.5"/>
<path d="M217,150 L231.6,146.4  C232.1,149.8 233.6,161.4 234.7,167.0 C235.8,172.6 236.7,175.3 238.0,180.0 C239.3,184.7 241.5,190.0 242.7,195.0 C243.9,200.0 244.3,204.2 245.3,210.0 C246.3,215.8 247.5,223.3 248.7,230.0 C249.9,236.7 251.9,243.3 252.7,250.0 C253.5,256.7 253.1,263.3 253.3,270.0 C253.5,276.7 253.9,280.5 254.0,290.0 C254.1,299.5 254.0,320.8 254.0,327.0 L243,328  C240.8,324.2 240.8,303.5 240.5,290.0 C240.2,276.5 240.4,262.5 239.3,250.0 C238.2,237.5 236.2,226.7 234.0,215.0 C231.8,203.3 228.8,190.8 226.0,180.0 C223.2,169.2 218.5,155.0 217.0,150.0 Z" fill="#f2f2f2" stroke-width="0.4"/>
<path d="M219.6,150 L231.6,146.4  C232.1,149.8 233.6,161.4 234.7,167.0 C235.8,172.6 236.7,175.3 238.0,180.0 C239.3,184.7 241.5,190.0 242.7,195.0 C243.9,200.0 244.3,204.2 245.3,210.0 C246.3,215.8 247.5,223.3 248.7,230.0 C249.9,236.7 251.9,243.3 252.7,250.0 C253.5,256.7 253.1,263.3 253.3,270.0 C253.5,276.7 253.9,280.5 254.0,290.0 C254.1,299.5 254.0,320.8 254.0,327.0 L242.7,328  C243.3,324.2 243.3,303.5 243.1,290.0 C242.8,276.5 243.0,262.5 241.9,250.0 C240.8,237.5 238.8,226.7 236.6,215.0 C234.4,203.3 231.4,190.8 228.6,180.0 C225.8,169.2 221.1,155.0 219.6,150.0 Z" fill="url(#bluestripe)" stroke-width="0.4"/>
<path d="M218.3,150.0 C219.8,155.0 224.5,169.2 227.3,180.0 C230.1,190.8 233.1,203.3 235.3,215.0 C237.5,226.7 239.5,237.5 240.6,250.0 C241.7,262.5 241.6,276.5 241.8,290.0 C242.1,303.5 242.1,324.2 242.1,331.0" fill="none" stroke="#777" stroke-width="1.2" stroke-dasharray="0.9,1.3"/>
<path d="M230.6,146.4 C231.1,149.8 232.6,161.4 233.7,167.0 C234.8,172.6 235.7,175.3 237.0,180.0 C238.3,184.7 240.5,190.0 241.7,195.0 C242.9,200.0 243.3,204.2 244.3,210.0 C245.3,215.8 246.5,223.3 247.7,230.0 C248.9,236.7 250.9,243.3 251.7,250.0 C252.5,256.7 252.1,263.3 252.3,270.0 C252.5,276.7 252.9,280.5 253.0,290.0 C253.1,299.5 253.0,320.8 253.0,327.0" fill="none" stroke="#ccc" stroke-width="0.9" stroke-dasharray="0.8,1.2"/>
<path d="M201.5,70.5 C204.9,74.6 213.1,83.6 222.0,95.0 C230.9,106.4 247.3,129.0 255.0,139.0 C262.7,149.0 264.5,150.3 268.0,155.0 C271.5,159.7 273.6,162.8 276.0,167.0 C278.4,171.2 280.6,175.3 282.7,180.0 C284.8,184.7 286.8,190.0 288.7,195.0 C290.6,200.0 292.8,204.2 294.0,210.0 C295.2,215.8 295.6,223.3 296.0,230.0 C296.4,236.7 296.6,243.3 296.7,250.0 C296.8,256.7 296.9,264.3 296.7,270.0 C296.5,275.7 296.0,280.3 295.5,284.0 C295.0,287.7 293.8,290.7 293.5,292.0" fill="none" stroke="#3a3a3a" stroke-width="3.4" stroke-linecap="round"/>
<path d="M201.5,70.5 C204.9,74.6 213.1,83.6 222.0,95.0 C230.9,106.4 247.3,129.0 255.0,139.0 C262.7,149.0 264.5,150.3 268.0,155.0 C271.5,159.7 273.6,162.8 276.0,167.0 C278.4,171.2 280.6,175.3 282.7,180.0 C284.8,184.7 286.8,190.0 288.7,195.0 C290.6,200.0 292.8,204.2 294.0,210.0 C295.2,215.8 295.6,223.3 296.0,230.0 C296.4,236.7 296.6,243.3 296.7,250.0 C296.8,256.7 296.9,264.3 296.7,270.0 C296.5,275.7 296.0,280.3 295.5,284.0 C295.0,287.7 293.8,290.7 293.5,292.0" fill="none" stroke="#f4f4f4" stroke-width="1.7" stroke-linecap="round"/>
<path d="M189.5,74.5 C191.4,80.8 197.4,99.4 201.0,112.0 C204.6,124.6 207.8,138.7 211.0,150.0 C214.2,161.3 217.2,169.2 220.0,180.0 C222.8,190.8 225.8,203.3 228.0,215.0 C230.2,226.7 232.3,237.5 233.5,250.0 C234.7,262.5 234.8,276.5 235.0,290.0 C235.2,303.5 235.0,324.2 235.0,331.0 L240.8,331.0 C240.8,324.2 240.8,303.5 240.5,290.0 C240.2,276.5 240.4,262.5 239.3,250.0 C238.2,237.5 236.2,226.7 234.0,215.0 C231.8,203.3 228.8,190.8 226.0,180.0 C223.2,169.2 220.2,161.3 217.0,150.0 C213.8,138.7 210.2,124.8 206.5,112.0 C202.8,99.2 196.9,79.9 195.0,73.5 Z" fill="#fafafa"/>
<path d="M191.0,74.5 C192.9,80.8 198.9,99.4 202.5,112.0 C206.1,124.6 209.3,138.7 212.5,150.0 C215.7,161.3 218.7,169.2 221.5,180.0 C224.3,190.8 227.2,203.3 229.5,215.0 C231.8,226.7 233.8,237.5 235.0,250.0 C236.2,262.5 236.2,276.5 236.5,290.0 C236.8,303.5 236.5,324.2 236.5,331.0" fill="none" stroke="#888" stroke-width="0.4"/>
<path d="M230.5,146 L251.5,147.5 L249,157 L235,157 Z" fill="#263a78" stroke-width="0.5"/>
<path d="M233,149 L249,150 M234,152 L248.5,153 M235,155 L248,155.5" stroke="#5a6a9a" stroke-width="0.5"/>
<ellipse cx="241.4" cy="142" rx="10.5" ry="5.2" fill="#1a3a1a" stroke="#1a2a1a" stroke-width="0.6"/>
<ellipse cx="241.4" cy="142" rx="8" ry="3.6" fill="none" stroke="#2a6a2a" stroke-width="1.3" stroke-dasharray="1.4,1.6"/>
<ellipse cx="241.4" cy="142" rx="4.5" ry="2.2" fill="#0c180c" stroke="none"/>
<path d="M170.3,138 L193.6,128.7 L200,137.4 L177.8,146 Z" fill="#f2f2f2"/>
<path d="M172,141 L195,132" stroke="#bbb" stroke-width="0.5" fill="none"/>
<path d="M170.3,138 L177.8,146 L174,146.5 L170,142 Z" fill="#111"/>
<path d="M209.9,121.1 L222.2,117.6 Q230,116.5 229.8,121.7 L228,124 L210.5,129.3 Z" fill="#f2f2f2"/>
</g>
</svg>
<svg width="600" height="37" viewBox="0 0 600 37" style="position:absolute;left:0;top:0">
<defs>
<radialGradient id="tlr" cx="0.5" cy="0.7" r="0.6"><stop offset="0" stop-color="#ffb0a8"/><stop offset="0.6" stop-color="#e0453a"/><stop offset="1" stop-color="#9a2a22"/></radialGradient>
<radialGradient id="tlo" cx="0.5" cy="0.7" r="0.6"><stop offset="0" stop-color="#fff09a"/><stop offset="0.6" stop-color="#f0a020"/><stop offset="1" stop-color="#a06010"/></radialGradient>
<radialGradient id="tlg" cx="0.5" cy="0.7" r="0.6"><stop offset="0" stop-color="#d8ffa0"/><stop offset="0.6" stop-color="#58b028"/><stop offset="1" stop-color="#2f6a18"/></radialGradient>
<radialGradient id="glob1" cx="0.4" cy="0.4" r="0.7"><stop offset="0" stop-color="#e8f2f8"/><stop offset="0.7" stop-color="#8fb4cc"/><stop offset="1" stop-color="#5a7f98"/></radialGradient>
<radialGradient id="glob2" cx="0.4" cy="0.4" r="0.7"><stop offset="0" stop-color="#7aa8d8"/><stop offset="0.6" stop-color="#1f4f8a"/><stop offset="1" stop-color="#0d2440"/></radialGradient>
</defs>
<path d="M0,0 L4,0 Q0.5,0.5 0,4 Z" fill="#222"/>
<path d="M600,0 L596,0 Q599.5,0.5 600,4 Z" fill="#222"/>
<circle cx="8.75" cy="6.5" r="4.3" fill="url(#tlr)" stroke="#7a7a7a" stroke-width="0.5"/>
<circle cx="21.25" cy="6.5" r="4.3" fill="url(#tlo)" stroke="#7a7a7a" stroke-width="0.5"/>
<circle cx="33.75" cy="6.5" r="4.3" fill="url(#tlg)" stroke="#7a7a7a" stroke-width="0.5"/>
<rect x="584.2" y="4.5" width="11.5" height="5" rx="2.5" fill="#f2f2f2" stroke="#6a6a6a" stroke-width="1"/>
<path d="M263,3 L269,3 L271,5 L271,11 L263,11 Z" fill="#f4f4f4" stroke="#bbb" stroke-width="0.5"/>
<path d="M267.5,3.5 L270,2 L270.5,4 Z" fill="#d33"/>
<line x1="54" y1="13" x2="54" y2="34" stroke="#c2c2c2" stroke-width="0.8" stroke-dasharray="1,0.6"/>
<line x1="155.5" y1="13" x2="155.5" y2="34" stroke="#c2c2c2" stroke-width="0.8" stroke-dasharray="1,0.6"/>
<line x1="234.3" y1="13" x2="234.3" y2="34" stroke="#c2c2c2" stroke-width="0.8" stroke-dasharray="1,0.6"/>
<line x1="312.5" y1="13" x2="312.5" y2="34" stroke="#c2c2c2" stroke-width="0.8" stroke-dasharray="1,0.6"/>
<line x1="415" y1="13" x2="415" y2="34" stroke="#c2c2c2" stroke-width="0.8" stroke-dasharray="1,0.6"/>
<line x1="447" y1="13" x2="447" y2="34" stroke="#c2c2c2" stroke-width="0.8" stroke-dasharray="1,0.6"/>
<line x1="525.5" y1="13" x2="525.5" y2="34" stroke="#c2c2c2" stroke-width="0.8" stroke-dasharray="1,0.6"/>
<path d="M12,20.5 L12,29 L13.8,27.2 L15.2,30 L16.3,29.4 L15,26.6 L17.3,26.4 Z" fill="#111" stroke="#999" stroke-width="0.4"/>
<path d="M31.5,21.5 L37,18 L44.5,20.5 L44,28 L38.5,31.5 L31.5,28.5 Z" fill="#e4e4e4" stroke="#ec8c74" stroke-width="1.1" stroke-linejoin="round"/>
<path d="M33,22 L37.5,19.8 L42.5,21.5 L38,24 Z" fill="#fafafa" stroke="#c8c8c8" stroke-width="0.4"/>
<path d="M38,24 L42.5,21.5 L42.3,26.5 L38.2,29 Z" fill="#d8d8d8"/>
<path d="M33,22 L38,24 L38.2,29 L33.2,27 Z" fill="#ececec"/>
<path d="M31.5,21.5 L38.5,24.5 L44.5,20.5 M38.5,24.5 L38.5,31.5" fill="none" stroke="#ec8c74" stroke-width="0.8"/>
<path d="M65.5,28.5 L74,19.5" stroke="#e01010" stroke-width="2.8" stroke-linecap="butt"/>
<path d="M73.5,20 L75,18.5" stroke="#f3a0b0" stroke-width="2.8"/>
<path d="M62.5,31 L64,27.5 L66.5,29.5 Z" fill="#222"/>
<path d="M66,30 L76,26.5" stroke="#b8b8b8" stroke-width="0.7"/>
<path d="M87.5,26 L96,18 L99.5,20 L99,24.5 L91,31.5 L87.5,29.5 Z" fill="#f07aa0"/>
<path d="M87.5,26 L96,18 L99.5,20 L91,28 Z" fill="#f8a8c4"/>
<path d="M91,28 L99.5,20 L99,24.5 L91,31.5 Z" fill="#e05a88"/>
<path d="M92,24 L95.5,21" stroke="#a04060" stroke-width="0.8"/>
<path d="M92,31 L100,26" stroke="#c8c8c8" stroke-width="1"/>
<ellipse cx="120" cy="29" rx="4" ry="1.1" fill="#c4c4c4"/>
<path d="M113.5,20.5 Q117,17 121.5,18.8 Q123.5,22 122,26 Q118,28.5 114.5,26.5 Q112.5,23.5 113.5,20.5 Z" fill="#4a4a4a"/>
<ellipse cx="118.2" cy="22.6" rx="2.7" ry="3.2" fill="#f2c200" transform="rotate(20 118.2 22.6)"/>
<circle cx="118.2" cy="22.6" r="0.8" fill="#806000"/>
<path d="M110,30 L115.2,26.2" stroke="#f0c800" stroke-width="1.9"/>
<path d="M109.2,29.4 L110.4,31.2" stroke="#333" stroke-width="1.1"/>
<ellipse cx="143" cy="30.2" rx="4.5" ry="1.2" fill="#c0c0c0"/>
<path d="M137.5,21.5 L145,19.5 L147.2,27 L140.5,30.5 Z" fill="#d6c69a" stroke="#2a2a2a" stroke-width="0.9" stroke-linejoin="round"/>
<path d="M139,20.8 Q141.5,16.5 146,19.5" fill="none" stroke="#2a2a2a" stroke-width="0.9"/>
<path d="M137.8,19.2 Q133,22 133.2,27 L134.6,30.5 L135.8,26 L138.5,21.5 Z" fill="#f0d000" stroke="#2a2a2a" stroke-width="0.5"/>
<path d="M164.3,18.5 L177.5,17.5 L178.3,30.8 L165,31.7 Z" fill="#c8ad88" stroke="#444" stroke-width="0.8"/>
<circle cx="194.2" cy="24.2" r="6.8" fill="#c8ad88" stroke="#444" stroke-width="0.8"/>
<path d="M214,30.8 Q211,22 218,18.5 Q222,17 225,20" fill="none" stroke="#333" stroke-width="1.3"/>
<path d="M222,19 Q224,19.5 225.5,21" fill="none" stroke="#bbb" stroke-width="1"/>
<path d="M243,26.5 L249.5,24.5 L256,26.5 L249.5,28.8 Z" fill="#e6d6b0"/>
<path d="M243,26.5 L249.5,28.8 L249.5,31.8 L243.2,29.5 Z" fill="#a88c64"/>
<path d="M249.5,28.8 L256,26.5 L255.8,29.3 L249.5,31.8 Z" fill="#8c7250"/>
<path d="M248.3,26.5 L248.3,22.3 L246.3,22.3 L249.6,17.8 L252.9,22.3 L250.9,22.3 L250.9,26.5 Z" fill="#f01818"/>
<g transform="translate(273.5,24.5) rotate(58)"><path d="M0,-8.2 L3,-3 L8.2,0 L3,3 L0,8.2 L-3,3 L-8.2,0 L-3,-3 Z" fill="#f01818"/><circle r="1.6" fill="#f4b0b0"/></g>
<path d="M291,22.5 A6,5.5 0 0 1 302,21" fill="none" stroke="#e81010" stroke-width="2.2"/>
<path d="M303.5,17.5 L304,24 L298.5,22.5 Z" fill="#e81010"/>
<path d="M302.5,26.5 A6,5.5 0 0 1 291.5,28" fill="none" stroke="#e81010" stroke-width="2.2"/>
<path d="M289.5,31.5 L289.5,25 L295,26.5 Z" fill="#e81010"/>
<path d="M322,31 Q319,22 326,19 Q331,17 335,21" fill="none" stroke="#555" stroke-width="1.4"/>
<path d="M325,30 Q324,24 328,22 Q331,21 333,23" fill="none" stroke="#777" stroke-width="1"/>
<path d="M324,22 L330,20 L327,25 Z" fill="#e81010"/>
<path d="M330,23 L333,21 L332,25 Z" fill="#e81010"/>
<rect x="340.3" y="13" width="23" height="23" fill="#c6c6c6"/>
<ellipse cx="351.5" cy="24.5" rx="6" ry="5" fill="none" stroke="#444" stroke-width="1" transform="rotate(-30 351.5 24.5)"/>
<path d="M345,22 L350,21 L348,26 Z M352,21 L356,18 L356,23 Z M350,27 L354,26 L353,30 Z M356,24 L358,27 L355,28 Z" fill="#e81010"/>
<path d="M346,23 L349,27 L354,29" fill="none" stroke="#e81010" stroke-width="1.8"/>
<path d="M352,20 L356,22 L357,26" fill="none" stroke="#e81010" stroke-width="1.8"/>
<path d="M369,26 L372,24 L373,19.5 Q374,18.5 375,19.5 L375.5,22 L376.5,18.5 Q377.5,17.8 378.3,18.8 L378.2,22 L379.5,19.5 Q380.7,19 381,20.5 L379.5,25 L380.5,25.5 Q381.5,26.5 380,28 L376,31 L370,31 Q368,29 369,26 Z" fill="#fafafa" stroke="#555" stroke-width="0.7"/>
<path d="M399.5,25.5 L405,30.5" stroke="#111" stroke-width="2"/>
<circle cx="396.8" cy="22.5" r="4" fill="#a8cbe8" stroke="#333" stroke-width="1"/>
<circle cx="395.8" cy="21.5" r="1.6" fill="#e8f4ff"/>
<path d="M431.5,25 L436.5,30" stroke="#111" stroke-width="1.8"/>
<circle cx="429.5" cy="22.8" r="3.3" fill="#a8cbe8" stroke="#333" stroke-width="0.8"/>
<path d="M423.3,17.8 L427.3,18.6 L424.1,21.8 Z M435.3,17.8 L434.5,21.8 L431.3,18.6 Z M423.3,28.6 L424.1,24.6 L427.3,27.8 Z" fill="#e81010"/>
<circle cx="434.2" cy="27.6" r="1.5" fill="#e81010"/>
<circle cx="461.8" cy="24.6" r="7.3" fill="url(#glob1)" stroke="#7a96a8" stroke-width="0.5"/>
<path d="M456,22 L463,21.5 L462.5,19.5 L467,23.5 L463,27 L463,25 L456,25.5 Z" fill="#f0d048"/>
<path d="M456,28.5 Q461.5,30.5 467,28.3" fill="none" stroke="#fff" stroke-width="0.8"/>
<rect x="476.5" y="15.5" width="18.3" height="18.4" fill="#f7f7f7"/>
<path d="M479,18 L492,23 L489.5,27 L485,30 L480.5,30.5 Z" fill="#b09670" stroke="#555" stroke-width="0.6"/>
<path d="M486,28 L491,25 L492.5,29 L489,31 Z" fill="#333"/>
<circle cx="508.6" cy="24.6" r="7.3" fill="url(#glob2)"/>
<path d="M514.5,21 Q509,20.5 507,23 L505.5,21.5 L502.5,26.5 L508,27 L506.8,25 Q509,23.5 513.5,24.5 Z" fill="#f07818"/>
<path d="M503,28.5 Q508.5,30.5 514,28.3" fill="none" stroke="#d8e4f0" stroke-width="0.8"/>
<path d="M534,22 L540,20 L547,22 L546.5,29 L540,31.3 L534.5,29 Z" fill="#a88658"/>
<path d="M534,22 L538,18.7 L541,21 Z M541,20 L545,18.7 L548,22 Z" fill="#c8a878"/>
<path d="M534.5,23 L540,25 L546.5,23" fill="none" stroke="#6a5030" stroke-width="0.6"/>
<path d="M538,28 L543,26 L542.5,24.5 L548,28 L544,31 L543.5,29.5 L539,30 Z" fill="#ecec18"/>
<path d="M557,22 L563,20.5 L570,22 L569.5,29 L563,31.3 L557.5,29 Z" fill="#a88658"/>
<path d="M557,22 L561,19 L564,21 Z M564,20.5 L568,19 L571,22 Z" fill="#c8a878"/>
<path d="M557.5,23 L563,25 L569.5,23" fill="none" stroke="#6a5030" stroke-width="0.6"/>
<path d="M561,25 L563.5,28.5 Q566,22 571.5,17.5 Q567,21 564,25.5 Z" fill="#f08a10" stroke="#f08a10" stroke-width="1.2"/>
</svg>
<div id="status"></div><div id="stxt">Drag to orbit.&nbsp; Shift = Pan</div><div id="field"></div><svg width="600" height="463" style="position:absolute;left:0;top:0"><path d="M593,462 L599,456 M596,462 L599,459" stroke="#9a9a9a" stroke-width="0.8"/></svg>
</body></html>
